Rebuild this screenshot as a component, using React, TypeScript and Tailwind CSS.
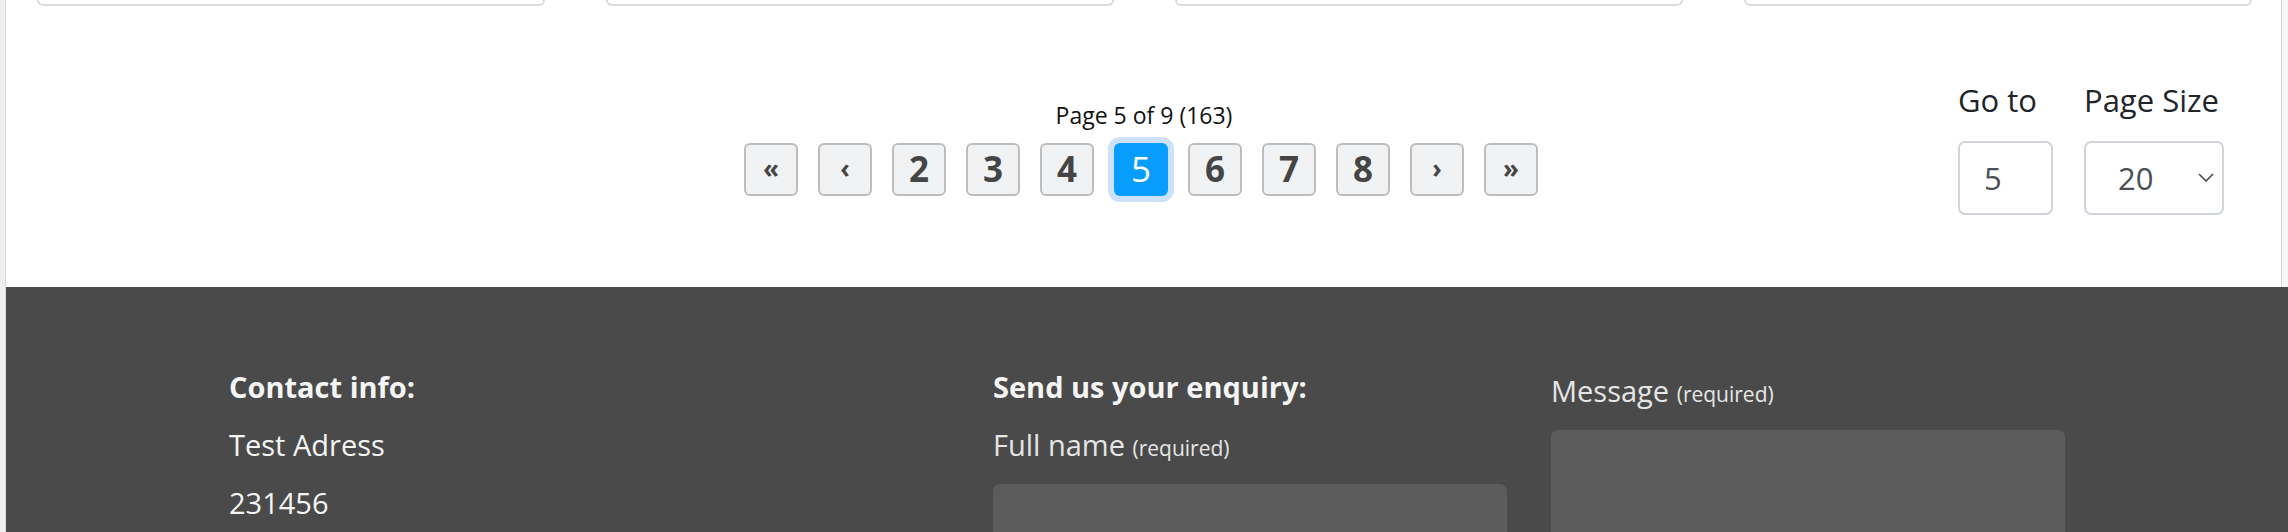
import { useState } from "react";

const pages = ["«", "‹", "2", "3", "4", "5", "6", "7", "8", "›", "»"];

function PageButton({ label, active }: { label: string; active?: boolean }) {
  const arrow = label === "«" || label === "‹" || label === "›" || label === "»";
  if (active) {
    return (
      <button className="w-[54px] h-[53px] rounded-[6px] bg-[#069dff] text-white text-[35px] leading-none flex items-center justify-center ring-[6px] ring-[#cde1fb] pb-[3px]">
        {label}
      </button>
    );
  }
  return (
    <button
      className={`w-[54px] h-[53px] rounded-[6px] border-2 border-[#bdbdbd] bg-[#f1f2f4] text-[#454545] font-bold leading-none flex items-center justify-center ${
        arrow ? "text-[26px] pb-[4px]" : "text-[35px] pb-[3px]"
      }`}
    >
      {label}
    </button>
  );
}

export default function App() {
  const [goTo, setGoTo] = useState("5");
  const [size, setSize] = useState("20");

  return (
    <div className="h-[532px] overflow-hidden flex bg-white font-['Open_Sans',sans-serif]">
      <div className="w-[6px] shrink-0 bg-[#eef0ef] border-r border-[#d9dcdb]" />
      <div className="flex-1 flex flex-col">
        <div className="flex">
          <div className="flex-1">
            {/* bottoms of the product cards above */}
            <div className="pl-[31px] grid grid-cols-[508px_508px_508px_508px] gap-x-[61px]">
              {[0, 1, 2, 3].map((i) => (
                <div key={i} className="h-[6px] border-2 border-t-0 border-[#dcdcdc] rounded-b-[8px]" />
              ))}
            </div>

            <div className="grid grid-cols-[1fr_auto_1fr] pt-[74px] pb-[72px]">
              <div />
              <div className="flex flex-col items-center pt-[20px] mr-[5px]">
                <div className="text-[23px] leading-[30px] text-[#111] ml-[6px]">Page 5 of 9 (163)</div>
                <div className="flex gap-[20px] mt-[13px]">
                  {pages.map((p) => (
                    <PageButton key={p} label={p} active={p === "5"} />
                  ))}
                </div>
              </div>
              <div className="flex justify-end pr-[57px] gap-[31px]">
                <div className="flex flex-col">
                  <span className="text-[31px] leading-[40px] text-[#212529]">Go to</span>
                  <input
                    value={goTo}
                    onChange={(e) => setGoTo(e.target.value)}
                    className="mt-[21px] w-[95px] h-[74px] border-2 border-[#d0d5db] rounded-[7px] pl-[24px] text-[31px] text-[#495057] outline-none"
                  />
                </div>
                <div className="flex flex-col">
                  <span className="text-[31px] leading-[40px] text-[#212529]">Page Size</span>
                  <div className="relative mt-[21px]">
                    <select
                      value={size}
                      onChange={(e) => setSize(e.target.value)}
                      className="appearance-none w-[140px] h-[74px] border-2 border-[#d0d5db] rounded-[7px] pl-[32px] text-[31px] text-[#495057] bg-white outline-none"
                    >
                      <option>10</option>
                      <option>20</option>
                      <option>50</option>
                    </select>
                    <svg
                      className="absolute right-[10px] top-[32px] pointer-events-none"
                      width="16"
                      height="9"
                      viewBox="0 0 16 9"
                      fill="none"
                      stroke="#4a4a4a"
                      strokeWidth="1.6"
                    >
                      <path d="M1 1l7 7 7-7" />
                    </svg>
                  </div>
                </div>
              </div>
            </div>
          </div>
          <div className="w-[7px] shrink-0 border-l border-[#d5d5d5] bg-[#f6f6f6]" />
        </div>

        <footer className="flex-1 bg-[#4a4a4a]">
          <div className="w-[1836px] mx-auto flex">
            <div className="w-[764px] pt-[71px] text-[29px] leading-[58px] text-[#f5f5f5]">
              <p className="font-bold">Contact info:</p>
              <p>Test Adress</p>
              <p>231456</p>
            </div>
            <div className="w-[514px] pt-[71px]">
              <p className="text-[29px] leading-[58px] font-bold text-[#f5f5f5]">Send us your enquiry:</p>
              <label className="block text-[29px] leading-[58px] text-[#e6e6e6]">
                Full name <span className="text-[21px]">(required)</span>
              </label>
              <input className="mt-[7px] w-full h-[62px] rounded-[7px] bg-[#5c5c5c] outline-none" />
            </div>
            <div className="w-[514px] ml-[44px] pt-[75px]">
              <label className="block text-[29px] leading-[58px] text-[#e6e6e6]">
                Message <span className="text-[21px]">(required)</span>
              </label>
              <textarea className="mt-[7px] w-full h-[200px] rounded-[7px] bg-[#5c5c5c] outline-none resize-none" />
            </div>
          </div>
        </footer>
      </div>
    </div>
  );
}
